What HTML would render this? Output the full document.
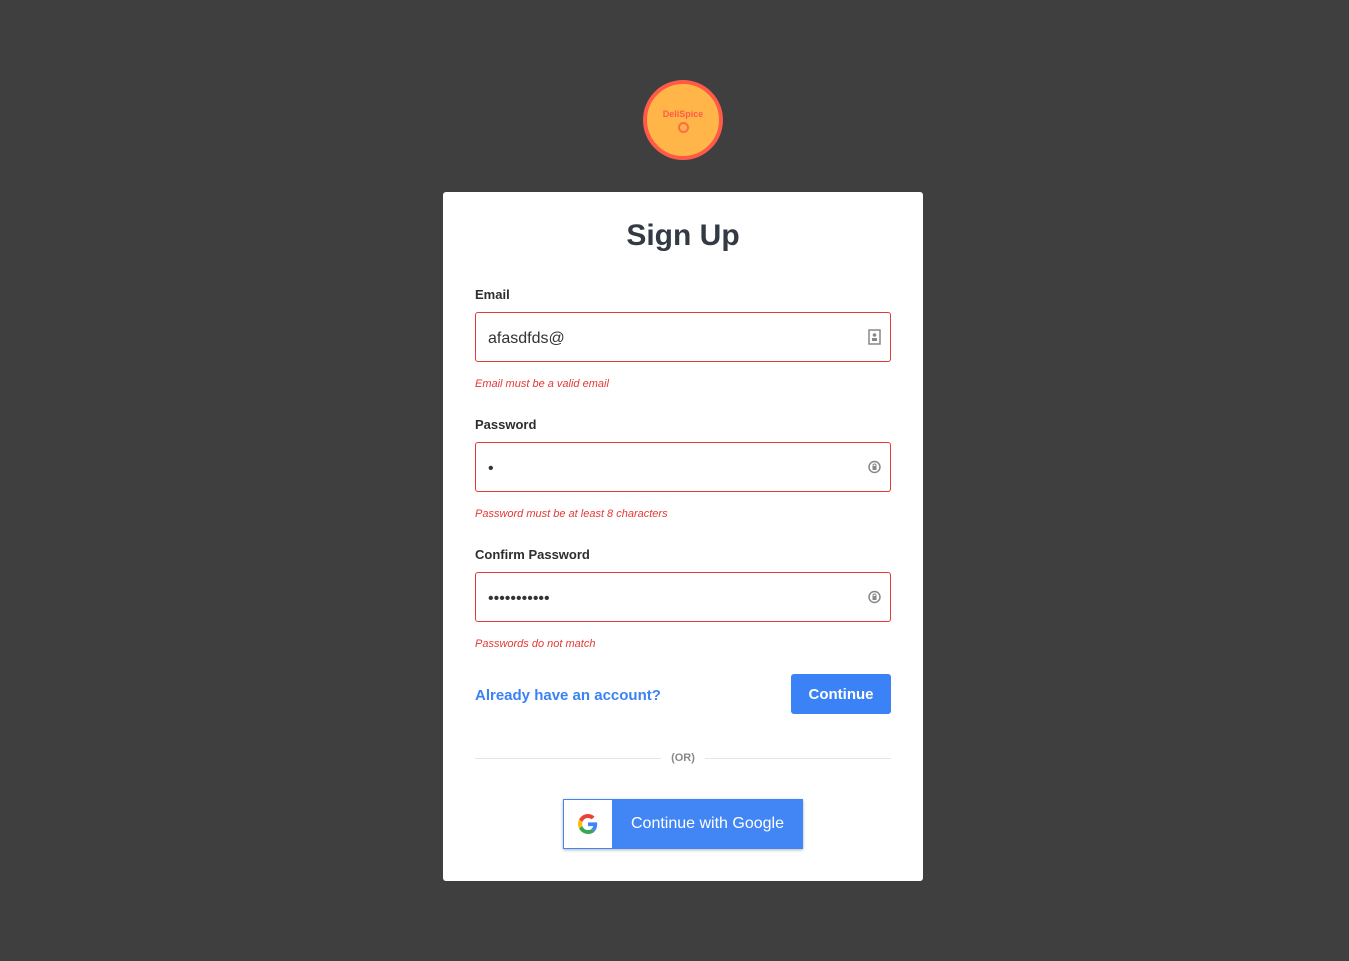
<!DOCTYPE html>
<html><head><style>
*{box-sizing:border-box;margin:0;padding:0}
body{width:1349px;height:961px;background:#3f3f3f;font-family:"Liberation Sans",sans-serif;position:relative;overflow:hidden}
.logo{position:absolute;left:643px;top:80px;width:80px;height:80px;border-radius:50%;background:#ffb547;border:4px solid #ff5a47;text-align:center;color:#ff5a47}
.logo .t{font-size:9px;font-weight:bold;margin-top:25px}
.logo .d{width:11px;height:11px;border-radius:50%;border:2px solid #ff6a47;margin:3px auto 0}
.card{position:absolute;left:443px;top:192px;width:480px;height:689px;background:#fff;border-radius:3px}
h1{position:absolute;top:27px;width:100%;text-align:center;font-size:30px;color:#333a44;font-weight:bold}
.lbl{position:absolute;left:32px;font-size:13px;font-weight:bold;color:#2d2d2d}
.inp{position:absolute;left:32px;width:416px;height:50px;border:1px solid #e53935;border-radius:3px;font-size:16px;color:#333;padding:17px 12px}
.err{position:absolute;left:32px;font-size:11px;color:#e53935;font-style:italic}
.ico{position:absolute;right:9px;top:16px;width:13px;height:16px}
.link{position:absolute;left:32px;top:495px;font-size:15px;font-weight:bold;color:#3b82f6}
.btn{position:absolute;left:348px;top:482px;width:100px;height:40px;background:#3b82f6;color:#fff;border-radius:3px;font-size:15px;font-weight:bold;text-align:center;line-height:42px}
.line{position:absolute;top:566px;height:1px;background:#e5e5e5}
.or{position:absolute;top:560px;left:0;width:100%;text-align:center;font-size:11px;color:#888;font-weight:bold}
.g{position:absolute;left:120px;top:607px;width:240px;height:50px;background:#4285f4;box-shadow:0 1px 3px rgba(0,0,0,.3)}
.g .w{position:absolute;left:1px;top:1px;width:48px;height:48px;background:#fff}
.g .tx{position:absolute;left:68px;top:16px;color:#fff;font-size:16px}
</style></head><body>
<div class="logo"><div class="t">DeliSpice</div><div class="d"></div></div>
<div class="card">
<h1>Sign Up</h1>
<div class="lbl" style="top:95px">Email</div>
<div class="inp" style="top:120px">afasdfds@<svg class="ico" viewBox="0 0 13 16"><rect x="1" y="1" width="11" height="14" fill="none" stroke="#888" stroke-width="1.5"/><circle cx="6.5" cy="6" r="1.8" fill="#888"/><rect x="4" y="9" width="5" height="3" fill="#888"/></svg></div>
<div class="err" style="top:186px">Email must be a valid email</div>
<div class="lbl" style="top:225px">Password</div>
<div class="inp" style="top:250px">•<svg class="ico" viewBox="0 0 13 16"><circle cx="6.5" cy="8" r="5.5" fill="none" stroke="#888" stroke-width="1.5"/><rect x="4.5" y="7" width="4" height="4" fill="#888"/><circle cx="6.5" cy="6.5" r="1.5" fill="none" stroke="#888"/></svg></div>
<div class="err" style="top:316px">Password must be at least 8 characters</div>
<div class="lbl" style="top:355px">Confirm Password</div>
<div class="inp" style="top:380px">•••••••••••<svg class="ico" viewBox="0 0 13 16"><circle cx="6.5" cy="8" r="5.5" fill="none" stroke="#888" stroke-width="1.5"/><rect x="4.5" y="7" width="4" height="4" fill="#888"/><circle cx="6.5" cy="6.5" r="1.5" fill="none" stroke="#888"/></svg></div>
<div class="err" style="top:446px">Passwords do not match</div>
<div class="link">Already have an account?</div>
<div class="btn">Continue</div>
<div class="line" style="left:32px;width:186px"></div>
<div class="line" style="left:262px;width:186px"></div>
<div class="or">(OR)</div>
<div class="g"><div class="w"><svg width="20" height="20" viewBox="0 0 48 48" style="position:absolute;left:14px;top:14px"><path fill="#EA4335" d="M24 9.5c3.5 0 6.6 1.2 9 3.5l6.7-6.7C35.6 2.4 30.2 0 24 0 14.6 0 6.6 5.4 2.7 13.2l7.8 6.1C12.4 13.7 17.7 9.5 24 9.5z"/><path fill="#4285F4" d="M46.1 24.5c0-1.6-.1-3.1-.4-4.5H24v9h12.4c-.5 2.9-2.200 5.3-4.6 7l7.5 5.8c4.4-4 6.8-10 6.8-17.3z"/><path fill="#FBBC05" d="M10.5 28.6c-.5-1.4-.8-3-.8-4.6s.3-3.2.8-4.6l-7.8-6.1C1 16.6 0 20.2 0 24s1 7.4 2.7 10.7l7.8-6.1z"/><path fill="#34A853" d="M24 48c6.5 0 11.9-2.1 15.9-5.8l-7.5-5.8c-2.1 1.4-4.8 2.3-8.4 2.3-6.3 0-11.6-4.2-13.500-9.9l-7.8 6.1C6.6 42.6 14.6 48 24 48z"/></svg></div><div class="tx">Continue with Google</div></div>
</div>
</body></html>
